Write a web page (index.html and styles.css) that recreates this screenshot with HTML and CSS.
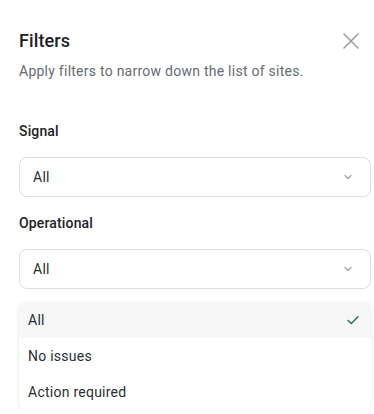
FILE: index.html
```html
<!DOCTYPE html>
<html>
<head>
<meta charset="utf-8">
<link rel="stylesheet" href="styles.css">
</head>
<body>
<div class="panel">
  <div class="header">
    <h1 class="title">Filters</h1>
    <button class="close" aria-label="Close">
      <svg width="16" height="16" viewBox="0 0 16 16"><path d="M1 1L15 15M15 1L1 15" stroke="#9a9ca3" stroke-width="1.5" fill="none" stroke-linecap="round"/></svg>
    </button>
  </div>
  <p class="desc">Apply filters to narrow down the list of sites.</p>

  <div class="field first">
    <label class="label">Signal</label>
    <div class="select"><span>All</span>
      <svg width="12" height="12" viewBox="0 0 12 12"><path d="M3 4.5L6 7.5L9 4.5" stroke="#9ca0a8" stroke-width="1.2" fill="none" stroke-linecap="round" stroke-linejoin="round"/></svg>
    </div>
  </div>

  <div class="field">
    <label class="label">Operational</label>
    <div class="select"><span>All</span>
      <svg width="12" height="12" viewBox="0 0 12 12"><path d="M3 4.5L6 7.5L9 4.5" stroke="#9ca0a8" stroke-width="1.2" fill="none" stroke-linecap="round" stroke-linejoin="round"/></svg>
    </div>
  </div>

  <ul class="menu">
    <li class="item active"><span>All</span>
      <svg width="14" height="14" viewBox="0 0 14 14"><path d="M2 7.5L5.3 10.5L12 3.8" stroke="#2f6f6a" stroke-width="1.5" fill="none" stroke-linecap="round" stroke-linejoin="round"/></svg>
    </li>
    <li class="item"><span>No issues</span></li>
    <li class="item"><span>Action required</span></li>
  </ul>
</div>
</body>
</html>
```
FILE: styles.css
```css
* { box-sizing: border-box; }
html, body { margin: 0; padding: 0; background: #fff; }
body {
  font-family: Roboto, "Noto Sans", sans-serif;
  color: #1f2328;
  overflow: hidden;
}
.panel {
  width: 352px;
  margin-left: 19px;
  padding-top: 27px;
}
.header {
  display: flex;
  align-items: center;
  justify-content: space-between;
  height: 28px;
}
.title {
  margin: 0;
  font-size: 18px;
  font-weight: 500;
  line-height: 28px;
  color: #1e2126;
  letter-spacing: 0.1px;
}
.close {
  border: 0;
  background: none;
  padding: 0;
  width: 16px;
  height: 16px;
  margin-right: 12px;
  display: flex;
}
.desc {
  margin: 6px 0 0;
  font-size: 14px;
  line-height: 20px;
  color: #666b73;
  letter-spacing: 0.25px;
}
.field { margin-top: 16px; }
.field.first { margin-top: 40px; }
.label {
  display: block;
  font-size: 14px;
  font-weight: 500;
  line-height: 20px;
  color: #1e2126;
  letter-spacing: 0.15px;
}
.select {
  margin-top: 16px;
  height: 40px;
  border: 1px solid #dcdee2;
  border-radius: 8px;
  display: flex;
  align-items: center;
  justify-content: space-between;
  padding: 0 16px 0 13px;
  font-size: 14px;
  color: #2a2e34;
  letter-spacing: 0.25px;
}
.menu {
  list-style: none;
  margin: 13px 0 0;
  padding: 0;
  border-radius: 6px;
  box-shadow: 0 1px 4px rgba(0,0,0,0.08), 0 0 1px rgba(0,0,0,0.06);
  overflow: hidden;
  background: #fff;
}
.item {
  height: 36px;
  display: flex;
  align-items: center;
  justify-content: space-between;
  padding: 0 11px 0 9px;
  font-size: 14px;
  color: #2a2e34;
  letter-spacing: 0.25px;
}
.item.active { background: #f7f7f8; }
```
